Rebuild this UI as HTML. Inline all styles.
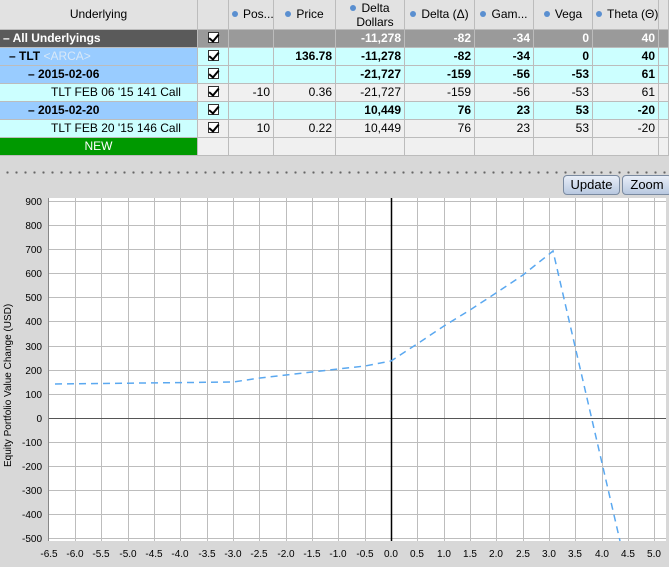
<!DOCTYPE html>
<html><head><meta charset="utf-8"><style>
*{margin:0;padding:0;box-sizing:border-box}
body{width:669px;height:567px;overflow:hidden;background:#d8d8d8;font-family:"Liberation Sans",sans-serif;font-size:12px;position:relative}
.c{position:absolute;border-right:1px solid #bcbcbc;border-bottom:1px solid #bcbcbc;height:18px;line-height:17px;padding:0 3px;white-space:nowrap;overflow:hidden;text-align:right}
.h{background:#e2e2e2;height:30px;text-align:center;line-height:29px;color:#000}
.b{font-weight:bold}
.dot{display:inline-block;width:6px;height:6px;border-radius:3px;background:#5a8fd0;margin-right:5px;vertical-align:1px}
.cb{display:inline-block;width:11px;height:11px;border:1px solid #333;background:#fff;position:relative;vertical-align:-1px}
.cb:after{content:"";position:absolute;left:2px;top:-1px;width:4px;height:8px;border:solid #000;border-width:0 2px 2px 0;transform:rotate(40deg)}
.btn{position:absolute;top:175px;height:20px;border:1px solid #7a8aa0;border-radius:4px;background:linear-gradient(#e8eef8,#b8c8e0);font-size:13px;line-height:18px;text-align:center}
</style></head><body>
<!-- header -->
<div class="c h" style="left:0;top:0;width:198px">Underlying</div>
<div class="c h" style="left:198px;top:0;width:31px"></div>
<div class="c h" style="left:229px;top:0;width:45px"><span class="dot"></span>Pos...</div>
<div class="c h" style="left:274px;top:0;width:62px"><span class="dot"></span>Price</div>
<div class="c h" style="left:336px;top:0;width:69px;line-height:14px;padding-top:1px"><span class="dot"></span>Delta<br>&nbsp;&nbsp;&nbsp;Dollars</div>
<div class="c h" style="left:405px;top:0;width:70px"><span class="dot"></span>Delta (Δ)</div>
<div class="c h" style="left:475px;top:0;width:59px"><span class="dot"></span>Gam...</div>
<div class="c h" style="left:534px;top:0;width:59px"><span class="dot"></span>Vega</div>
<div class="c h" style="left:593px;top:0;width:66px"><span class="dot"></span>Theta (Θ)</div>
<div class="c h" style="left:659px;top:0;width:10px"></div>

<!-- row1 -->
<div class="c b" style="left:0;top:30px;width:198px;background:#5a5a5a;color:#fff;text-align:left">&#8211; All Underlyings</div>
<div class="c" style="left:198px;top:30px;width:31px;background:#9a9a9a;text-align:center"><span class="cb"></span></div>
<div class="c" style="left:229px;top:30px;width:45px;background:#9a9a9a"></div>
<div class="c" style="left:274px;top:30px;width:62px;background:#9a9a9a"></div>
<div class="c b" style="left:336px;top:30px;width:69px;background:#9a9a9a;color:#fff">-11,278</div>
<div class="c b" style="left:405px;top:30px;width:70px;background:#9a9a9a;color:#fff">-82</div>
<div class="c b" style="left:475px;top:30px;width:59px;background:#9a9a9a;color:#fff">-34</div>
<div class="c b" style="left:534px;top:30px;width:59px;background:#9a9a9a;color:#fff">0</div>
<div class="c b" style="left:593px;top:30px;width:66px;background:#9a9a9a;color:#fff">40</div>
<div class="c" style="left:659px;top:30px;width:10px;background:#9a9a9a"></div>

<!-- row2 TLT -->
<div class="c b" style="left:0;top:48px;width:198px;background:#99ccff;text-align:left;padding-left:9px">&#8211; TLT <span style="color:#d8e8f8;font-weight:normal">&lt;ARCA&gt;</span></div>
<div class="c" style="left:198px;top:48px;width:31px;background:#ccffff;text-align:center"><span class="cb"></span></div>
<div class="c" style="left:229px;top:48px;width:45px;background:#ccffff"></div>
<div class="c b" style="left:274px;top:48px;width:62px;background:#ccffff">136.78</div>
<div class="c b" style="left:336px;top:48px;width:69px;background:#ccffff">-11,278</div>
<div class="c b" style="left:405px;top:48px;width:70px;background:#ccffff">-82</div>
<div class="c b" style="left:475px;top:48px;width:59px;background:#ccffff">-34</div>
<div class="c b" style="left:534px;top:48px;width:59px;background:#ccffff">0</div>
<div class="c b" style="left:593px;top:48px;width:66px;background:#ccffff">40</div>
<div class="c" style="left:659px;top:48px;width:10px;background:#ccffff"></div>

<!-- row3 date -->
<div class="c b" style="left:0;top:66px;width:198px;background:#99ccff;text-align:left;padding-left:28px">&#8211; 2015-02-06</div>
<div class="c" style="left:198px;top:66px;width:31px;background:#ccffff;text-align:center"><span class="cb"></span></div>
<div class="c" style="left:229px;top:66px;width:45px;background:#ccffff"></div>
<div class="c" style="left:274px;top:66px;width:62px;background:#ccffff"></div>
<div class="c b" style="left:336px;top:66px;width:69px;background:#ccffff">-21,727</div>
<div class="c b" style="left:405px;top:66px;width:70px;background:#ccffff">-159</div>
<div class="c b" style="left:475px;top:66px;width:59px;background:#ccffff">-56</div>
<div class="c b" style="left:534px;top:66px;width:59px;background:#ccffff">-53</div>
<div class="c b" style="left:593px;top:66px;width:66px;background:#ccffff">61</div>
<div class="c" style="left:659px;top:66px;width:10px;background:#ccffff"></div>

<!-- row4 call -->
<div class="c" style="left:0;top:84px;width:198px;background:#ccffff;text-align:left;padding-left:51px">TLT FEB 06 '15 141 Call</div>
<div class="c" style="left:198px;top:84px;width:31px;background:#f0f0f0;text-align:center"><span class="cb"></span></div>
<div class="c" style="left:229px;top:84px;width:45px;background:#f0f0f0">-10</div>
<div class="c" style="left:274px;top:84px;width:62px;background:#f0f0f0">0.36</div>
<div class="c" style="left:336px;top:84px;width:69px;background:#f0f0f0">-21,727</div>
<div class="c" style="left:405px;top:84px;width:70px;background:#f0f0f0">-159</div>
<div class="c" style="left:475px;top:84px;width:59px;background:#f0f0f0">-56</div>
<div class="c" style="left:534px;top:84px;width:59px;background:#f0f0f0">-53</div>
<div class="c" style="left:593px;top:84px;width:66px;background:#f0f0f0">61</div>
<div class="c" style="left:659px;top:84px;width:10px;background:#f0f0f0"></div>

<!-- row5 date -->
<div class="c b" style="left:0;top:102px;width:198px;background:#99ccff;text-align:left;padding-left:28px">&#8211; 2015-02-20</div>
<div class="c" style="left:198px;top:102px;width:31px;background:#ccffff;text-align:center"><span class="cb"></span></div>
<div class="c" style="left:229px;top:102px;width:45px;background:#ccffff"></div>
<div class="c" style="left:274px;top:102px;width:62px;background:#ccffff"></div>
<div class="c b" style="left:336px;top:102px;width:69px;background:#ccffff">10,449</div>
<div class="c b" style="left:405px;top:102px;width:70px;background:#ccffff">76</div>
<div class="c b" style="left:475px;top:102px;width:59px;background:#ccffff">23</div>
<div class="c b" style="left:534px;top:102px;width:59px;background:#ccffff">53</div>
<div class="c b" style="left:593px;top:102px;width:66px;background:#ccffff">-20</div>
<div class="c" style="left:659px;top:102px;width:10px;background:#ccffff"></div>

<!-- row6 call -->
<div class="c" style="left:0;top:120px;width:198px;background:#ccffff;text-align:left;padding-left:51px">TLT FEB 20 '15 146 Call</div>
<div class="c" style="left:198px;top:120px;width:31px;background:#f0f0f0;text-align:center"><span class="cb"></span></div>
<div class="c" style="left:229px;top:120px;width:45px;background:#f0f0f0">10</div>
<div class="c" style="left:274px;top:120px;width:62px;background:#f0f0f0">0.22</div>
<div class="c" style="left:336px;top:120px;width:69px;background:#f0f0f0">10,449</div>
<div class="c" style="left:405px;top:120px;width:70px;background:#f0f0f0">76</div>
<div class="c" style="left:475px;top:120px;width:59px;background:#f0f0f0">23</div>
<div class="c" style="left:534px;top:120px;width:59px;background:#f0f0f0">53</div>
<div class="c" style="left:593px;top:120px;width:66px;background:#f0f0f0">-20</div>
<div class="c" style="left:659px;top:120px;width:10px;background:#f0f0f0"></div>

<!-- row7 NEW -->
<div class="c" style="left:0;top:138px;width:198px;background:#009900;color:#fff;text-align:center">NEW</div>
<div class="c" style="left:198px;top:138px;width:31px;background:#f0f0f0"></div>
<div class="c" style="left:229px;top:138px;width:45px;background:#f0f0f0"></div>
<div class="c" style="left:274px;top:138px;width:62px;background:#f0f0f0"></div>
<div class="c" style="left:336px;top:138px;width:69px;background:#f0f0f0"></div>
<div class="c" style="left:405px;top:138px;width:70px;background:#f0f0f0"></div>
<div class="c" style="left:475px;top:138px;width:59px;background:#f0f0f0"></div>
<div class="c" style="left:534px;top:138px;width:59px;background:#f0f0f0"></div>
<div class="c" style="left:593px;top:138px;width:66px;background:#f0f0f0"></div>
<div class="c" style="left:659px;top:138px;width:10px;background:#f0f0f0"></div>

<div style="position:absolute;left:3px;top:171px;width:666px;height:3px;background:radial-gradient(circle,#666 1px,transparent 1.3px) 0 0/9px 3px"></div>
<div class="btn" style="left:563px;width:57px">Update</div>
<div class="btn" style="left:622px;width:50px">Zoom</div>

<svg width="669" height="567" style="position:absolute;left:0;top:0" font-family="Liberation Sans, sans-serif" font-size="10">
<rect x="49" y="198" width="617" height="343" fill="#fff"/>
<g stroke="#bdbdbd" stroke-width="1">
<line x1="49" y1="201.5" x2="666" y2="201.5"/><line x1="49" y1="225.5" x2="666" y2="225.5"/><line x1="49" y1="249.5" x2="666" y2="249.5"/><line x1="49" y1="273.5" x2="666" y2="273.5"/><line x1="49" y1="297.5" x2="666" y2="297.5"/><line x1="49" y1="321.5" x2="666" y2="321.5"/><line x1="49" y1="346.5" x2="666" y2="346.5"/><line x1="49" y1="370.5" x2="666" y2="370.5"/><line x1="49" y1="394.5" x2="666" y2="394.5"/><line x1="49" y1="442.5" x2="666" y2="442.5"/><line x1="49" y1="466.5" x2="666" y2="466.5"/><line x1="49" y1="490.5" x2="666" y2="490.5"/><line x1="49" y1="514.5" x2="666" y2="514.5"/><line x1="49" y1="538.5" x2="666" y2="538.5"/>
<line x1="75.5" y1="198" x2="75.5" y2="541"/><line x1="101.5" y1="198" x2="101.5" y2="541"/><line x1="128.5" y1="198" x2="128.5" y2="541"/><line x1="154.5" y1="198" x2="154.5" y2="541"/><line x1="180.5" y1="198" x2="180.5" y2="541"/><line x1="207.5" y1="198" x2="207.5" y2="541"/><line x1="233.5" y1="198" x2="233.5" y2="541"/><line x1="259.5" y1="198" x2="259.5" y2="541"/><line x1="286.5" y1="198" x2="286.5" y2="541"/><line x1="312.5" y1="198" x2="312.5" y2="541"/><line x1="338.5" y1="198" x2="338.5" y2="541"/><line x1="365.5" y1="198" x2="365.5" y2="541"/><line x1="417.5" y1="198" x2="417.5" y2="541"/><line x1="444.5" y1="198" x2="444.5" y2="541"/><line x1="470.5" y1="198" x2="470.5" y2="541"/><line x1="496.5" y1="198" x2="496.5" y2="541"/><line x1="523.5" y1="198" x2="523.5" y2="541"/><line x1="549.5" y1="198" x2="549.5" y2="541"/><line x1="575.5" y1="198" x2="575.5" y2="541"/><line x1="602.5" y1="198" x2="602.5" y2="541"/><line x1="628.5" y1="198" x2="628.5" y2="541"/><line x1="654.5" y1="198" x2="654.5" y2="541"/>
</g>
<line x1="49" y1="418.5" x2="666" y2="418.5" stroke="#555"/>
<line x1="391.5" y1="198" x2="391.5" y2="541" stroke="#000" stroke-width="1.5"/>
<line x1="48.5" y1="198" x2="48.5" y2="541" stroke="#888"/>
<polyline fill="none" stroke="#5aa8f0" stroke-width="1.5" stroke-dasharray="7,5" points="55,384 233,382 260,378 286,375 312,372 338,369 365,366 391,361 417,344 444,326 470,310 496,293 523,275 553,251 620,541"/>
<g text-anchor="end" fill="#000">
<text x="42" y="205">900</text><text x="42" y="229">800</text><text x="42" y="253">700</text><text x="42" y="277">600</text><text x="42" y="301">500</text><text x="42" y="325">400</text><text x="42" y="350">300</text><text x="42" y="374">200</text><text x="42" y="398">100</text><text x="42" y="422">0</text><text x="42" y="446">-100</text><text x="42" y="470">-200</text><text x="42" y="494">-300</text><text x="42" y="518">-400</text><text x="42" y="542">-500</text>
</g>
<g text-anchor="middle" fill="#000">
<text x="49" y="557">-6.5</text><text x="75" y="557">-6.0</text><text x="101" y="557">-5.5</text><text x="128" y="557">-5.0</text><text x="154" y="557">-4.5</text><text x="180" y="557">-4.0</text><text x="207" y="557">-3.5</text><text x="233" y="557">-3.0</text><text x="259" y="557">-2.5</text><text x="286" y="557">-2.0</text><text x="312" y="557">-1.5</text><text x="338" y="557">-1.0</text><text x="365" y="557">-0.5</text><text x="391" y="557">0.0</text><text x="417" y="557">0.5</text><text x="444" y="557">1.0</text><text x="470" y="557">1.5</text><text x="496" y="557">2.0</text><text x="523" y="557">2.5</text><text x="549" y="557">3.0</text><text x="575" y="557">3.5</text><text x="602" y="557">4.0</text><text x="628" y="557">4.5</text><text x="654" y="557">5.0</text>
</g>
<text x="0" y="0" transform="translate(11,467) rotate(-90)" font-size="10">Equity Portfolio Value Change (USD)</text>
</svg>
</body></html>
